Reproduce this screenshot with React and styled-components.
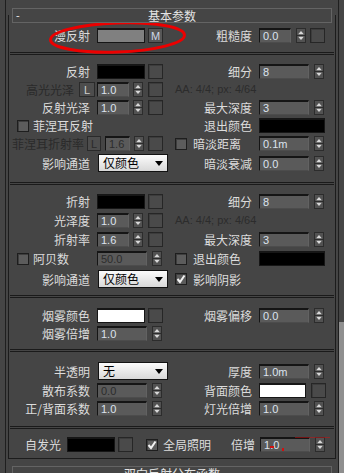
import React from 'react';
import styled, { createGlobalStyle, css } from 'styled-components';

const Global = createGlobalStyle`
  html, body { margin: 0; padding: 0; background: #454545; }
  body { font-family: "Noto Sans CJK SC", "Noto Sans", sans-serif; }
  * { box-sizing: border-box; }
`;

const ml = css`
  margin-left: ${(p) => p.$ml || 0}px;
`;

const Screen = styled.div`
  position: relative;
  width: 344px;
  height: 473px;
  overflow: hidden;
  background: #454545;
  padding-left: 5px;
  display: flex;
`;

const OuterFrame = styled.div`
  width: 334px;
  height: 100%;
  flex: none;
  border-left: 1px solid #1f1f1f;
  border-right: 1px solid #1f1f1f;
  padding: 8px 2px 0 2px;
`;

const ScrollTrack = styled.div`
  width: 5px;
  flex: none;
  padding-top: 322px;
`;

const Thumb = styled.div`
  width: 5px;
  height: 160px;
  background: #8f8f8f;
`;

const Rollout = styled.div`
  position: relative;
  padding-bottom: ${(p) => (p.$open ? 1 : 0)}px;
  margin-top: ${(p) => p.$mt || 0}px;
  &::before {
    content: '';
    position: absolute;
    left: 0;
    right: 0;
    top: 7px;
    bottom: 0;
    border-left: 1px solid #1c1c1c;
    border-right: 1px solid #1c1c1c;
    border-bottom: ${(p) => (p.$open ? '1px solid #1c1c1c' : 'none')};
    pointer-events: none;
  }
`;

const TitleBar = styled.div`
  position: relative;
  z-index: 1;
  margin: 0 4px;
  height: 15px;
  border: 1px solid #646464;
  background: #454545;
  display: grid;
  grid-template-columns: 1fr auto 1fr;
  align-items: center;
  font-size: 12px;
  line-height: 13px;
  color: #e4e4e4;
`;

const Collapse = styled.span`
  justify-self: start;
  padding-left: 3px;
  font-family: "Liberation Sans", Arial, sans-serif;
  font-size: 11px;
  line-height: 13px;
  color: #e4e4e4;
`;

const Section = styled.div`
  display: flex;
  flex-direction: column;
  gap: ${(p) => p.$gap || 3}px;
  padding: ${(p) => p.$pt || 0}px 0 ${(p) => p.$pb || 0}px 1px;
`;

const Divider = styled.div`
  margin: 0 2px;
  height: 3px;
  border-top: 1px solid #1a1a1a;
  border-bottom: 1px solid #1a1a1a;
`;

const Row = styled.div`
  display: flex;
  align-items: center;
  height: ${(p) => p.$h || 15}px;
`;

const Half = styled.div`
  display: flex;
  align-items: center;
  flex: none;
  width: ${(p) => p.$w}px;
  height: 100%;
  padding-left: ${(p) => p.$pl || 0}px;
`;

const Label = styled.span`
  ${ml};
  flex: none;
  width: ${(p) => (p.$w ? `${p.$w}px` : 'auto')};
  text-align: ${(p) => p.$align || 'right'};
  font-size: 12px;
  line-height: 15px;
  color: ${(p) => (p.$dim ? '#2a2a2a' : '#dcdcdc')};
  white-space: nowrap;
`;

const Info = styled.span`
  font-family: "Liberation Sans", Arial, sans-serif;
  font-size: 11px;
  line-height: 15px;
  color: #2c2c2c;
  white-space: nowrap;
`;

const Swatch = styled.div`
  ${ml};
  flex: none;
  width: ${(p) => p.$w}px;
  height: 15px;
  background: ${(p) => p.$c};
  border: 1px solid #161616;
  border-top-width: 2px;
`;

const MapBox = styled.div`
  ${ml};
  flex: none;
  width: 15px;
  height: 15px;
  border: 1px solid #262626;
  background: #4a4a4a;
  box-shadow: inset 1px 1px 0 #3c3c3c;
`;

const MBtn = styled.div`
  ${ml};
  flex: none;
  width: 15px;
  height: 15px;
  border: 1px solid #2a2a2a;
  background: #575757;
  display: flex;
  align-items: center;
  justify-content: center;
  font-family: "Liberation Sans", Arial, sans-serif;
  font-size: 11px;
  color: #cdd6e6;
`;

const LBtn = styled.div`
  ${ml};
  flex: none;
  width: ${(p) => p.$w || 16}px;
  height: 15px;
  border: 1px solid #2a2a2a;
  background: #4d4d4d;
  display: flex;
  align-items: center;
  justify-content: center;
  font-family: "Liberation Sans", Arial, sans-serif;
  font-size: 11px;
  color: ${(p) => (p.$dim ? '#2a2a2a' : '#cfcfcf')};
`;

const Field = styled.div`
  ${ml};
  flex: none;
  width: ${(p) => p.$w}px;
  height: 15px;
  background: #5a5a5a;
  border-top: 2px solid #151515;
  border-left: 1px solid #151515;
  border-right: 1px solid #626262;
  border-bottom: 1px solid #4c4c4c;
  padding-left: 3px;
  font-family: "Liberation Sans", Arial, sans-serif;
  font-size: 11px;
  line-height: 12px;
  color: ${(p) => (p.$dim ? '#2c2c2c' : '#dde3ee')};
  white-space: nowrap;
`;

const SpinBox = styled.div`
  ${ml};
  flex: none;
  width: 10px;
  height: 15px;
  border: 1px solid #2c2c2c;
  background: #525252;
  display: flex;
`;

const Spinner = ({ ml: m }) => (
  <SpinBox $ml={m}>
    <svg width="8" height="13" viewBox="0 0 8 13">
      <path d="M4 2 L6.8 5.2 L1.2 5.2 Z" fill="#d8d8d8" />
      <line x1="0" y1="6.5" x2="8" y2="6.5" stroke="#2c2c2c" />
      <path d="M1.2 7.8 L6.8 7.8 L4 11 Z" fill="#d8d8d8" />
    </svg>
  </SpinBox>
);

const CheckBox = styled.div`
  ${ml};
  flex: none;
  width: 12px;
  height: 12px;
  border: 1px solid #1e1e1e;
  background: #5c5c5c;
  box-shadow: inset 1px 1px 0 #3e3e3e;
  display: flex;
  align-items: center;
  justify-content: center;
`;

const Check = ({ ml: m, on }) => (
  <CheckBox $ml={m}>
    {on && (
      <svg width="10" height="10" viewBox="0 0 10 10">
        <path d="M1.5 5 L4 8 L8.5 1.5" fill="none" stroke="#f2f2f2" strokeWidth="2" />
      </svg>
    )}
  </CheckBox>
);

const DropBox = styled.div`
  ${ml};
  flex: none;
  width: ${(p) => p.$w}px;
  height: 18px;
  border: 1px solid #121212;
  background: linear-gradient(#fbfbfb, #d8d8d8);
  display: flex;
  align-items: center;
  justify-content: space-between;
  padding: 0 4px 0 4px;
  font-size: 12px;
  line-height: 16px;
  color: #000;
`;

const Dropdown = ({ ml: m, w, value }) => (
  <DropBox $ml={m} $w={w}>
    <span>{value}</span>
    <svg width="8" height="5" viewBox="0 0 8 5">
      <path d="M0 0 L8 0 L4 5 Z" fill="#000" />
    </svg>
  </DropBox>
);

const Ellipse = styled.svg`
  position: absolute;
  left: 0;
  top: 0;
  pointer-events: none;
`;

const Blot = styled.div`
  position: absolute;
  left: ${(p) => p.$x}px;
  top: ${(p) => p.$y}px;
  width: ${(p) => p.$w}px;
  height: ${(p) => p.$h}px;
  background: ${(p) => p.$c || '#d01010'};
  opacity: ${(p) => p.$o || 1};
`;

const SwatchLeft = ({ label, color, mlbox = 3 }) => (
  <Half $w={163}>
    <Label $w={81}>{label}</Label>
    <Swatch $ml={7} $w={48} $c={color} />
    <MapBox $ml={mlbox} />
  </Half>
);

const SmallFieldLeft = ({ label, value }) => (
  <Half $w={163}>
    <Label $w={81}>{label}</Label>
    <Field $ml={7} $w={32}>{value}</Field>
    <Spinner ml={4} />
    <MapBox $ml={5} />
  </Half>
);

const WideFieldLeft = ({ label, value, dim }) => (
  <Half $w={163}>
    <Label $w={81}>{label}</Label>
    <Field $ml={7} $w={50} $dim={dim}>{value}</Field>
    <Spinner ml={5} />
  </Half>
);

const FieldRight = ({ label, value }) => (
  <Half $w={160}>
    <Label $w={80}>{label}</Label>
    <Field $ml={7} $w={50}>{value}</Field>
    <Spinner ml={5} />
  </Half>
);

const DropLeft = ({ label, value }) => (
  <Half $w={163}>
    <Label $w={81}>{label}</Label>
    <Dropdown ml={8} w={70} value={value} />
  </Half>
);

export default function App() {
  return (
    <>
      <Global />
      <Screen>
        <OuterFrame>
          <Rollout $open>
            <TitleBar>
              <Collapse>-</Collapse>
              <span>基本参数</span>
              <span />
            </TitleBar>

            <Section $pt={5} $pb={9}>
              <Row>
                <Half $w={163}>
                  <Label $w={81}>漫反射</Label>
                  <Swatch $ml={7} $w={48} $c="#808080" />
                  <MBtn $ml={3}>M</MBtn>
                </Half>
                <Half $w={160}>
                  <Label $w={80}>粗糙度</Label>
                  <Field $ml={7} $w={32}>0.0</Field>
                  <Spinner ml={5} />
                  <MapBox $ml={4} />
                </Half>
              </Row>
            </Section>
            <Divider />

            <Section $pt={9} $pb={10}>
              <Row>
                <SwatchLeft label="反射" color="#000" />
                <FieldRight label="细分" value="8" />
              </Row>
              <Row>
                <Half $w={163}>
                  <Label $w={65} $dim>高光光泽</Label>
                  <LBtn $ml={5}>L</LBtn>
                  <Field $ml={2} $w={32}>1.0</Field>
                  <Spinner ml={4} />
                  <MapBox $ml={5} />
                </Half>
                <Half $w={160} $pl={3}>
                  <Info>AA: 4/4; px: 4/64</Info>
                </Half>
              </Row>
              <Row>
                <SmallFieldLeft label="反射光泽" value="1.0" />
                <FieldRight label="最大深度" value="3" />
              </Row>
              <Row>
                <Half $w={163} $pl={8}>
                  <Check />
                  <Label $ml={4}>菲涅耳反射</Label>
                </Half>
                <Half $w={160}>
                  <Label $w={80}>退出颜色</Label>
                  <Swatch $ml={7} $w={66} $c="#000" />
                </Half>
              </Row>
              <Row>
                <Half $w={163}>
                  <Label $w={75} $dim>菲涅耳折射率</Label>
                  <LBtn $ml={3} $w={14} $dim>L</LBtn>
                  <Field $ml={4} $w={25} $dim>1.6</Field>
                  <Spinner ml={4} />
                  <MapBox $ml={4} />
                </Half>
                <Half $w={160} $pl={3}>
                  <Check />
                  <Label $ml={6} $w={59} $align="left">暗淡距离</Label>
                  <Field $ml={7} $w={50}>0.1m</Field>
                  <Spinner ml={5} />
                </Half>
              </Row>
              <Row $h={18}>
                <DropLeft label="影响通道" value="仅颜色" />
                <FieldRight label="暗淡衰减" value="0.0" />
              </Row>
            </Section>
            <Divider />

            <Section $pt={9} $pb={7} $gap={4}>
              <Row>
                <SwatchLeft label="折射" color="#000" />
                <FieldRight label="细分" value="8" />
              </Row>
              <Row>
                <SmallFieldLeft label="光泽度" value="1.0" />
                <Half $w={160} $pl={3}>
                  <Info>AA: 4/4; px: 4/64</Info>
                </Half>
              </Row>
              <Row>
                <SmallFieldLeft label="折射率" value="1.6" />
                <FieldRight label="最大深度" value="3" />
              </Row>
              <Row>
                <Half $w={163} $pl={8}>
                  <Check />
                  <Label $ml={4} $w={57} $align="left">阿贝数</Label>
                  <Field $ml={7} $w={50} $dim>50.0</Field>
                  <Spinner ml={5} />
                </Half>
                <Half $w={160} $pl={3}>
                  <Check />
                  <Label $ml={6} $w={59} $align="left">退出颜色</Label>
                  <Swatch $ml={7} $w={66} $c="#000" />
                </Half>
              </Row>
              <Row $h={18}>
                <DropLeft label="影响通道" value="仅颜色" />
                <Half $w={160} $pl={3}>
                  <Check on />
                  <Label $ml={6} $align="left">影响阴影</Label>
                </Half>
              </Row>
            </Section>
            <Divider />

            <Section $pt={10} $pb={8}>
              <Row>
                <SwatchLeft label="烟雾颜色" color="#fff" />
                <FieldRight label="烟雾偏移" value="0.0" />
              </Row>
              <Row>
                <WideFieldLeft label="烟雾倍增" value="1.0" />
              </Row>
            </Section>
            <Divider />

            <Section $pt={10} $pb={10}>
              <Row $h={18}>
                <DropLeft label="半透明" value="无" />
                <FieldRight label="厚度" value="1.0m" />
              </Row>
              <Row>
                <WideFieldLeft label="散布系数" value="0.0" dim />
                <Half $w={160}>
                  <Label $w={80}>背面颜色</Label>
                  <Swatch $ml={7} $w={47} $c="#fff" />
                  <MapBox $ml={5} />
                </Half>
              </Row>
              <Row>
                <WideFieldLeft label="正/背面系数" value="1.0" />
                <FieldRight label="灯光倍增" value="1.0" />
              </Row>
            </Section>
            <Divider />

            <Section $pt={8} $pb={6}>
              <Row>
                <Label $w={52}>自发光</Label>
                <Swatch $ml={6} $w={48} $c="#000" />
                <MapBox $ml={3} />
                <Check ml={13} on />
                <Label $ml={5}>全局照明</Label>
                <Label $ml={20}>倍增</Label>
                <Field $ml={5} $w={50}>1.0</Field>
                <Spinner ml={5} />
              </Row>
            </Section>
          </Rollout>

          <Rollout $mt={7}>
            <TitleBar>
              <span />
              <span>双向反射分布函数</span>
              <span />
            </TitleBar>
          </Rollout>
        </OuterFrame>
        <ScrollTrack>
          <Thumb />
        </ScrollTrack>

        <Ellipse width="344" height="80" viewBox="0 0 344 80">
          <ellipse
            cx="117.5"
            cy="37.5"
            rx="67"
            ry="14.5"
            fill="none"
            stroke="#ec0000"
            strokeWidth="3"
            transform="rotate(-2 117.5 37.5)"
          />
        </Ellipse>
        <Blot $x={270} $y={446} $w={4} $h={2} />
        <Blot $x={282} $y={448} $w={2} $h={3} />
        <Blot $x={295} $y={437} $w={35} $h={1} $o={0.5} />
      </Screen>
    </>
  );
}
